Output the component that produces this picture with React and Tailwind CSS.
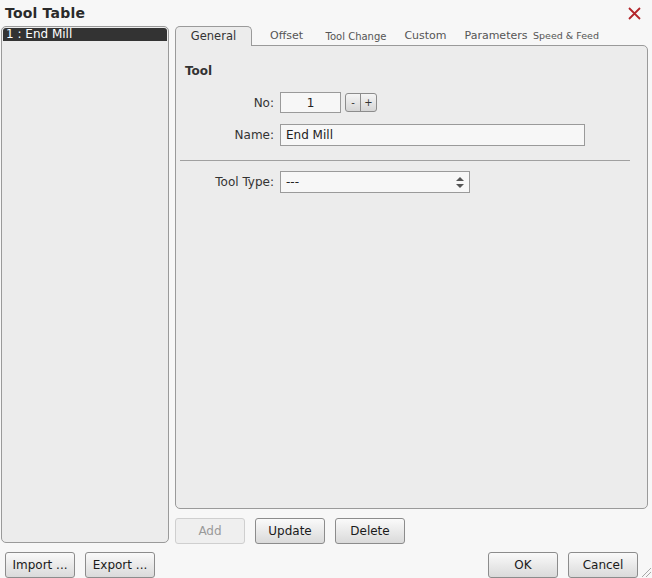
import React from 'react';

const font = { fontFamily: '"DejaVu Sans", Verdana, sans-serif' };

function Btn({ children, disabled }) {
  return (
    <button
      disabled={disabled}
      className={
        'w-[70px] h-[26px] rounded-[3px] border text-[12px] ' +
        (disabled
          ? 'border-[#cfcfcf] bg-[#efefef] text-[#9a9a9a]'
          : 'border-[#8c8c8c] bg-gradient-to-b from-[#fafafa] to-[#dadada] text-[#1a1a1a]')
      }
    >
      {children}
    </button>
  );
}

const tabs = [
  { label: 'Offset', w: 'w-[69px]', size: 'text-[11px]' },
  { label: 'Tool Change', w: 'w-[70px]', size: 'text-[10px]' },
  { label: 'Custom', w: 'w-[69px]', size: 'text-[11px]' },
  { label: 'Parameters', w: 'w-[72px]', size: 'text-[11px]' },
  { label: 'Speed & Feed', w: 'w-[68px]', size: 'text-[9.5px]' },
];

export default function App() {
  return (
    <div className="relative w-[652px] h-[578px] bg-[#f7f7f7] flex flex-col overflow-hidden" style={font}>
      {/* title bar */}
      <div className="h-[26px] flex items-center justify-between pl-[5px] pr-[11px]">
        <span className="text-[14px] font-bold text-[#2a2a2a] leading-none tracking-[0.2px]">Tool Table</span>
        <svg width="13" height="13" viewBox="0 0 13 13">
          <path d="M1 1 L12 12 M12 1 L1 12" stroke="#b3262b" strokeWidth="1.8" />
        </svg>
      </div>

      <div className="flex-1 flex">
        {/* left column */}
        <div className="w-[169px] pl-px flex flex-col">
          <div className="flex-1 border border-[#9a9a9a] rounded-[5px] bg-[#ececec] p-px">
            <div className="h-[13px] bg-[#333333] text-white text-[12px] leading-[13px] pl-[3px] rounded-tl-[3px] rounded-tr-[3px]">
              1 : End Mill
            </div>
          </div>
          <div className="flex gap-[10px] pl-[4px] mt-[9px]">
            <Btn>Import ...</Btn>
            <Btn>Export ...</Btn>
          </div>
        </div>

        {/* right column */}
        <div className="flex-1 ml-[6px] mr-[4px] flex flex-col">
          {/* tabs */}
          <div className="flex h-[20px] items-end">
            <div className="relative z-10 w-[77px] h-[20px] border border-b-0 border-[#9a9a9a] rounded-t-[5px] bg-[#ececec] flex items-center justify-center text-[11.5px] text-[#333]">
              General
            </div>
            {tabs.map(t => (
              <div key={t.label} className={t.w + ' h-[20px] flex items-center justify-center whitespace-nowrap text-[#555] ' + t.size}>
                {t.label}
              </div>
            ))}
          </div>

          {/* panel */}
          <div className="-mt-px flex-1 border border-[#9a9a9a] rounded-b-[5px] rounded-tr-[5px] bg-[#ececec] px-[4px] pt-[16px]">
            <div className="text-[12px] font-bold text-[#333] pl-[5px]">Tool</div>

            <div className="flex items-center mt-[12px]">
              <div className="w-[94px] text-right text-[12px] text-[#333]">No:</div>
              <div className="ml-[6px] w-[61px] h-[21px] border border-[#9a9a9a] bg-[#f7f7f7] text-[12px] text-[#222] flex items-center justify-center">1</div>
              <div className="ml-[4px] flex h-[19px] rounded-[3px] border border-[#8c8c8c] bg-gradient-to-b from-[#f5f5f5] to-[#d6d6d6] text-[10px] text-[#333]">
                <div className="w-[15px] flex items-center justify-center border-r border-[#8c8c8c]">-</div>
                <div className="w-[15px] flex items-center justify-center">+</div>
              </div>
            </div>

            <div className="flex items-center mt-[11px]">
              <div className="w-[94px] text-right text-[12px] text-[#333]">Name:</div>
              <div className="ml-[6px] w-[305px] h-[22px] border border-[#9a9a9a] bg-[#f7f7f7] text-[12px] text-[#222] flex items-center pl-[5px]">End Mill</div>
            </div>

            <div className="mt-[14px] h-px bg-[#a0a0a0] w-[450px]" />

            <div className="flex items-center mt-[10px]">
              <div className="w-[94px] text-right text-[12px] text-[#333]">Tool Type:</div>
              <div className="ml-[6px] w-[190px] h-[22px] border border-[#9a9a9a] bg-[#f7f7f7] text-[12px] text-[#222] flex items-center justify-between pl-[5px] pr-[5px]">
                <span>---</span>
                <svg width="8" height="11" viewBox="0 0 8 11">
                  <path d="M4 0 L8 4 L0 4 Z M0 7 L8 7 L4 11 Z" fill="#555" />
                </svg>
              </div>
            </div>
          </div>

          <div className="flex gap-[10px] mt-[9px]">
            <Btn disabled>Add</Btn>
            <Btn>Update</Btn>
            <Btn>Delete</Btn>
          </div>

          <div className="flex justify-end gap-[10px] mt-[8px] pr-[10px]">
            <Btn>OK</Btn>
            <Btn>Cancel</Btn>
          </div>
        </div>
      </div>

      {/* resize grip */}
      <svg className="absolute right-0 bottom-0" width="14" height="14" viewBox="0 0 14 14">
        <path d="M13 4 L4 13 M13 8 L8 13" stroke="#a8a8a8" strokeWidth="1" />
      </svg>
    </div>
  );
}
